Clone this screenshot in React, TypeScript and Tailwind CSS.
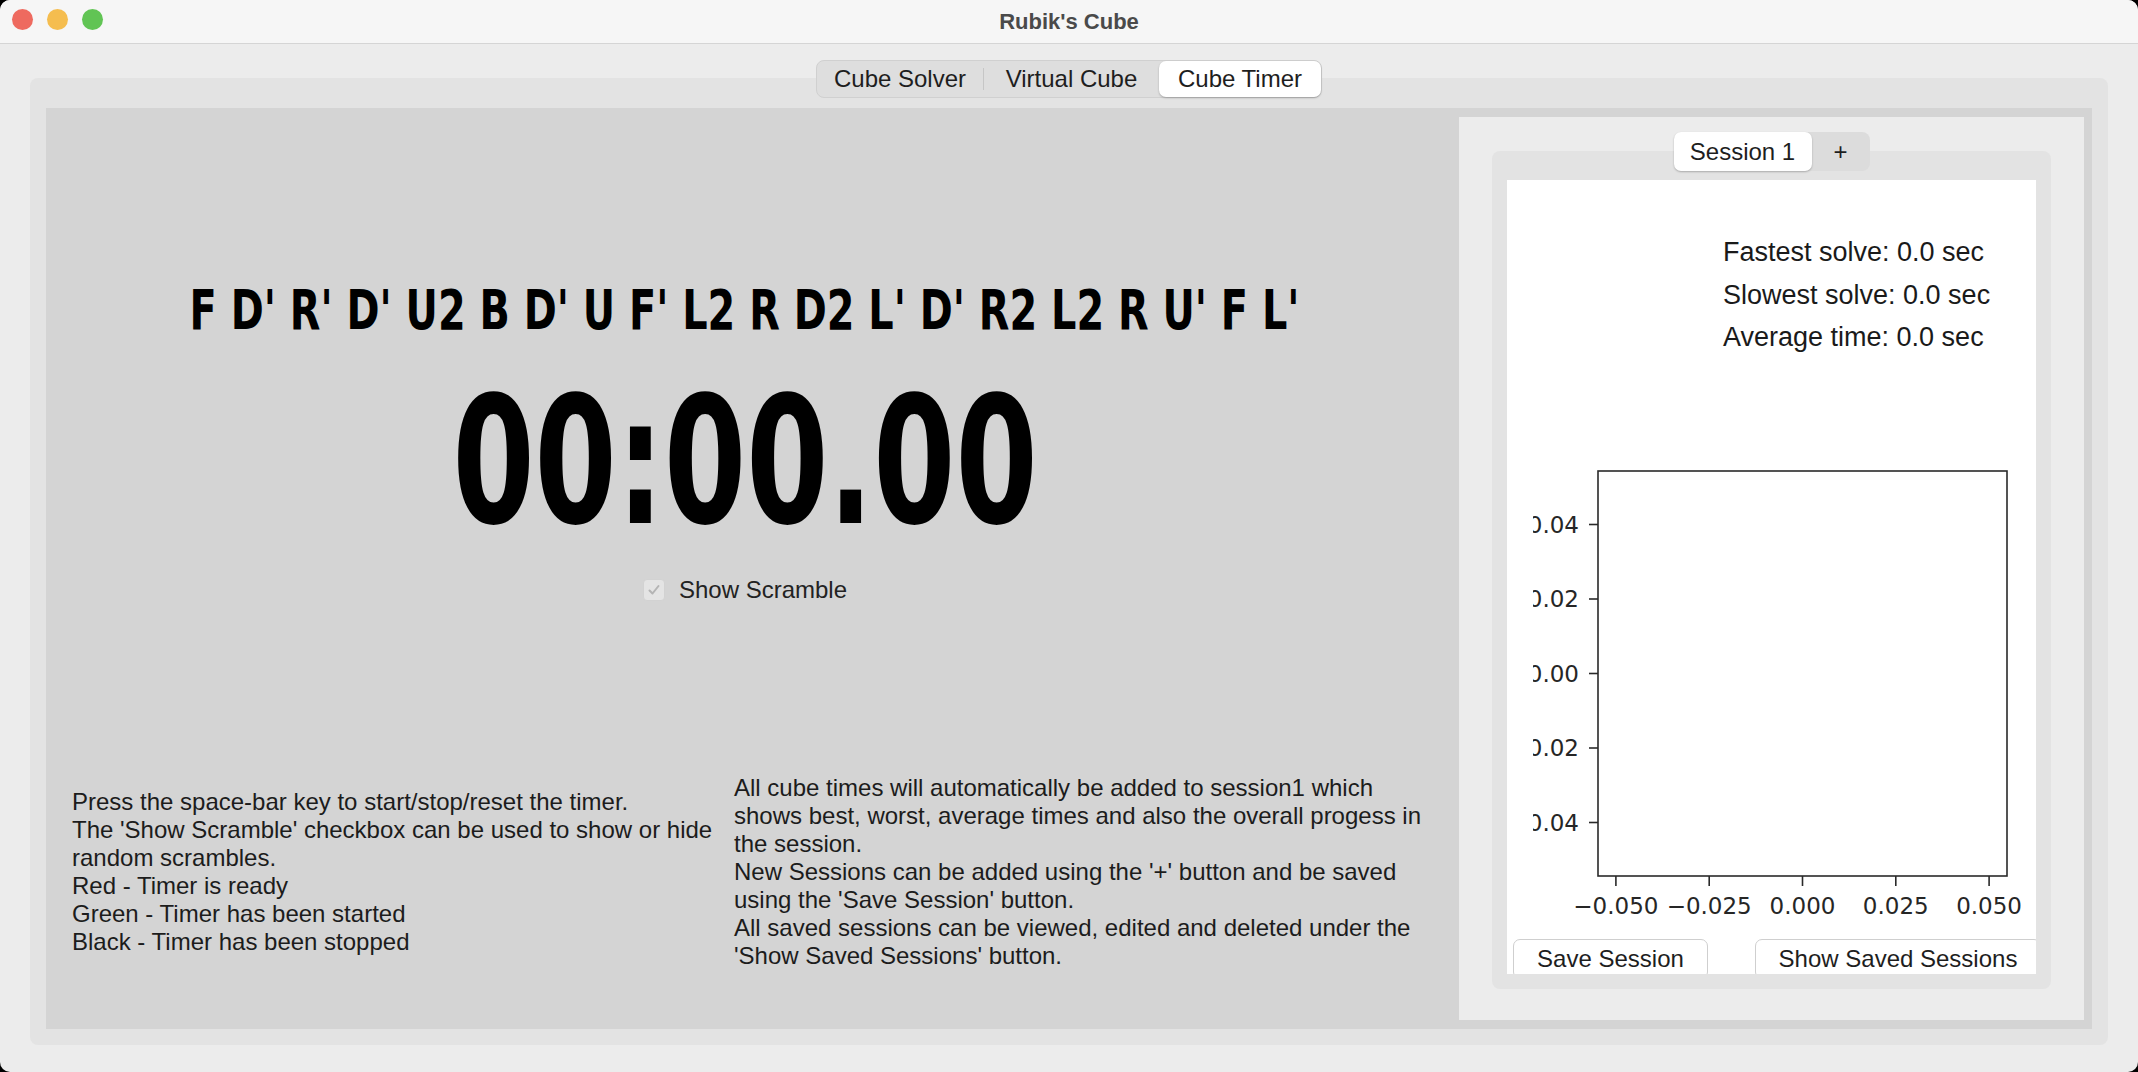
import { FC } from "react";

const helpLeft = [
  "Press the space-bar key to start/stop/reset the timer.",
  "The 'Show Scramble' checkbox can be used to show or hide",
  "random scrambles.",
  "Red - Timer is ready",
  "Green - Timer has been started",
  "Black - Timer has been stopped",
];

const helpRight = [
  "All cube times will automatically be added to session1 which",
  "shows best, worst, average times and also the overall progess in",
  "the session.",
  "New Sessions can be added using the '+' button and be saved",
  "using the 'Save Session' button.",
  "All saved sessions can be viewed, edited and deleted under the",
  "'Show Saved Sessions' button.",
];

const TitleBar: FC = () => (
  <div className="relative flex h-[44px] shrink-0 items-center justify-center border-b border-[#d5d5d5] bg-[#f6f6f6]">
    <div className="absolute left-[12px] top-[9px] flex gap-[14px]">
      <span className="h-[21px] w-[21px] rounded-full bg-[#ee6a5f]" />
      <span className="h-[21px] w-[21px] rounded-full bg-[#f5bd4f]" />
      <span className="h-[21px] w-[21px] rounded-full bg-[#61c454]" />
    </div>
    <span className="text-[22px] font-bold text-[#4a4a4a]">Rubik's Cube</span>
  </div>
);

const MainTabs: FC = () => (
  <div className="relative z-10 flex h-[38px] w-[506px] items-center rounded-[8px] border border-[#d0d0d0] bg-[#dedede] text-[24px] text-[#1e1e1e]">
    <div className="flex h-full w-[166px] items-center justify-center">Cube Solver</div>
    <div className="h-[22px] w-px bg-[#c6c6c6]" />
    <div className="flex h-full w-[175px] items-center justify-center">Virtual Cube</div>
    {/* selected tab */}
    <div className="flex h-[36px] flex-1 items-center justify-center rounded-[7px] bg-white shadow-[0_1px_2px_rgba(0,0,0,0.25)]">
      Cube Timer
    </div>
  </div>
);

const TimerPane: FC = () => (
  <div className="flex min-w-0 flex-1 flex-col">
    <div className="flex flex-col items-center pr-[15px] pt-[174px] text-black">
      {/* condensed look: DejaVu bold squeezed horizontally */}
      <div className="scale-x-[0.711] whitespace-nowrap font-['DejaVu_Sans',sans-serif] text-[56px] font-bold leading-[56px]">
        F D' R' D' U2 B D' U F' L2 R D2 L' D' R2 L2 R U' F L'
      </div>
      <div className="mt-[35px] scale-x-[0.671] font-['DejaVu_Sans',sans-serif] text-[176px] font-bold leading-[180px]">
        00:00.00
      </div>
      <label className="mt-[25px] flex h-[24px] items-center gap-[14px] text-[24px] text-[#222]">
        <span className="flex h-[22px] w-[22px] items-center justify-center rounded-[4px] border border-[#d2d2d2] bg-[#e4e4e4]">
          <svg width="14" height="14" viewBox="0 0 14 14" fill="none">
            <path d="M2.5 7.5 L5.5 10.5 L11.5 3" stroke="#b4b4b4" strokeWidth="2" strokeLinecap="round" strokeLinejoin="round" />
          </svg>
        </span>
        Show Scramble
      </label>
    </div>

    <div className="mt-[172px] grid grid-cols-[662px_1fr] items-center pl-[26px] text-[24px] leading-[28px] text-[#1c1c1c]">
      <div>
        {helpLeft.map((line) => (
          <div key={line} className="whitespace-nowrap">{line}</div>
        ))}
      </div>
      <div>
        {helpRight.map((line) => (
          <div key={line} className="whitespace-nowrap">{line}</div>
        ))}
      </div>
    </div>
  </div>
);

const yTicks = [
  { label: "0.04", y: 165.5 },
  { label: "0.02", y: 240 },
  { label: "0.00", y: 314.5 },
  { label: "\u22120.02", y: 389 },
  { label: "\u22120.04", y: 463.5 },
];

const xTicks = [
  { label: "\u22120.050", x: 108.9 },
  { label: "\u22120.025", x: 202.2 },
  { label: "0.000", x: 295.5 },
  { label: "0.025", x: 388.8 },
  { label: "0.050", x: 482.1 },
];

const SessionChart: FC = () => (
  <svg width="529" height="580" className="block shrink-0" fontFamily="DejaVu Sans, sans-serif" fontSize="23" fill="#262626">
    <defs>
      <clipPath id="ylabels">
        <rect x="26" y="0" width="503" height="580" />
      </clipPath>
    </defs>
    <rect x="91" y="112" width="409" height="405" fill="white" stroke="#2a2a2a" strokeWidth="1.6" />
    <g clipPath="url(#ylabels)">
      {yTicks.map((t) => (
        <g key={t.label}>
          <line x1="82" x2="91" y1={t.y} y2={t.y} stroke="#2a2a2a" strokeWidth="1.6" />
          <text x="72" y={t.y + 8} textAnchor="end">{t.label}</text>
        </g>
      ))}
    </g>
    {xTicks.map((t) => (
      <g key={t.label}>
        <line x1={t.x} x2={t.x} y1="517" y2="527" stroke="#2a2a2a" strokeWidth="1.6" />
        <text x={t.x} y="555" textAnchor="middle">{t.label}</text>
      </g>
    ))}
  </svg>
);

const SessionPane: FC = () => (
  <div className="my-[9px] mr-[8px] flex w-[625px] shrink-0 flex-col items-center bg-[#ececec] px-[33px] pb-[31px] pt-[15px]">
    <div className="relative z-10 flex h-[39px] w-[196px] items-center rounded-[8px] bg-[#dcdcdc] text-[24px] text-[#1e1e1e]">
      <div className="flex h-full w-[138px] items-center justify-center rounded-[7px] bg-white shadow-[0_1px_2px_rgba(0,0,0,0.25)]">
        Session 1
      </div>
      <div className="flex flex-1 items-center justify-center">+</div>
    </div>
    <div className="-mt-[20px] flex min-h-0 w-full flex-1 flex-col rounded-[8px] bg-[#e3e3e3] px-[15px] pb-[15px] pt-[29px]">
      <div className="flex min-h-0 flex-1 flex-col overflow-hidden bg-white">
        <div className="shrink-0 pl-[216px] pt-[51px] text-[27px] leading-[42.5px] text-[#1a1a1a]">
          <div>Fastest solve: 0.0 sec</div>
          <div>Slowest solve: 0.0 sec</div>
          <div>Average time: 0.0 sec</div>
        </div>
        <SessionChart />
        <div className="flex shrink-0 text-[24px] text-[#1e1e1e]">
          <button className="ml-[6px] h-[40px] w-[195px] shrink-0 rounded-[7px] border border-[#cfcfcf] bg-white">
            Save Session
          </button>
          <button className="ml-[47px] h-[40px] w-[286px] shrink-0 rounded-[7px] border border-[#cfcfcf] bg-white">
            Show Saved Sessions
          </button>
        </div>
      </div>
    </div>
  </div>
);

export default function App() {
  return (
    <div className="h-[1072px] w-[2138px] bg-black font-['Liberation_Sans',Arial,sans-serif]">
      <div className="flex h-full flex-col overflow-hidden rounded-[10px] bg-[#ececec]">
        <TitleBar />
        <div className="flex min-h-0 flex-1 flex-col items-center px-[30px] pb-[27px] pt-[16px]">
          <MainTabs />
          <div className="-mt-[20px] flex min-h-0 w-full flex-1 rounded-[8px] bg-[#e3e3e3] px-[16px] pb-[16px] pt-[30px]">
            <div className="flex min-w-0 flex-1 bg-[#d4d4d4]">
              <TimerPane />
              <SessionPane />
            </div>
          </div>
        </div>
      </div>
    </div>
  );
}
